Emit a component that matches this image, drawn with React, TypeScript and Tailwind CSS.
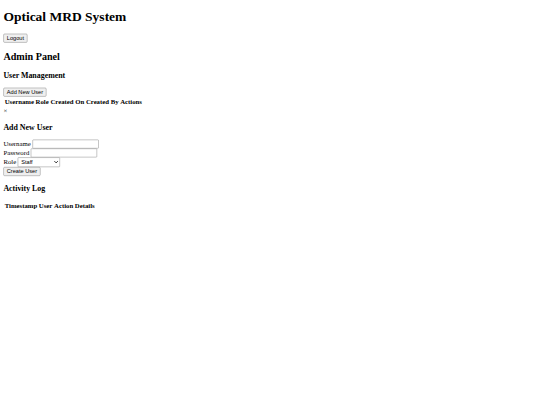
const btn =
  "rounded-[3px] border border-[#767676] bg-[#efefef] px-[7px] py-[2px] font-['Liberation_Sans',Arial,sans-serif] text-[13.333px] leading-[normal] text-black";
const field =
  "rounded-[2px] border border-[#767676] bg-white px-[3px] py-[2px] font-['Liberation_Sans',Arial,sans-serif] text-[13.333px] leading-[normal] text-black";

function HeaderTable({ cols }: { cols: string[] }) {
  return (
    <table className="border-separate border-spacing-[2px]">
      <thead>
        <tr>
          {cols.map((c) => (
            <th key={c} className="p-[1px] text-center font-bold">
              {c}
            </th>
          ))}
        </tr>
      </thead>
      <tbody></tbody>
    </table>
  );
}

export default function App() {
  return (
    <div className="h-screen w-screen overflow-hidden bg-white">
      <div className="flow-root w-[1280px] origin-top-left scale-[0.421875] px-2 pb-2 font-['Liberation_Serif',serif] text-[16px] leading-[normal] text-black">
        <h1 className="my-[21.44px] text-[32px] font-bold">Optical MRD System</h1>
        <button className={btn}>Logout</button>

        <div>
          <h2 className="my-[19.92px] text-[24px] font-bold">Admin Panel</h2>

          <section>
            <h3 className="my-[18.72px] text-[18.72px] font-bold">User Management</h3>
            <button className={btn}>Add New User</button>
            <HeaderTable cols={["Username", "Role", "Created On", "Created By", "Actions"]} />
          </section>

          {/* add user modal */}
          <div>
            <span>×</span>
            <h3 className="my-[18.72px] text-[18.72px] font-bold">Add New User</h3>
            <form>
              <div>
                <label>Username</label>{" "}
                <input type="text" className={`${field} w-[157px]`} />
              </div>
              <div>
                <label>Password</label>{" "}
                <input type="password" className={`${field} w-[157px]`} />
              </div>
              <div>
                <label>Role</label>{" "}
                <select className={`${field} w-[100px] py-[1px]`} defaultValue="staff">
                  <option value="staff">Staff</option>
                  <option value="admin">Admin</option>
                </select>
              </div>
              <button type="submit" className={btn}>
                Create User
              </button>
            </form>
          </div>

          <section>
            <h3 className="my-[18.72px] text-[18.72px] font-bold">Activity Log</h3>
            <HeaderTable cols={["Timestamp", "User", "Action", "Details"]} />
          </section>
        </div>
      </div>
    </div>
  );
}
